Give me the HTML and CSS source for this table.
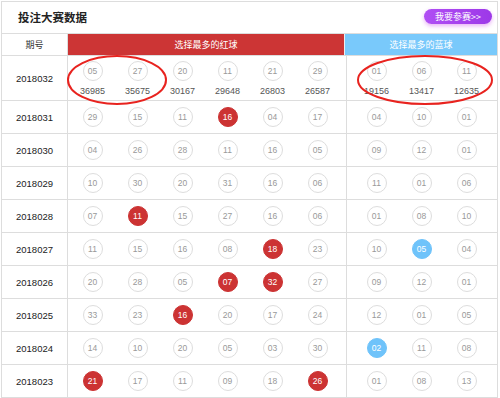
FILE: index.html
```html
<!DOCTYPE html>
<html lang="zh">
<head>
<meta charset="utf-8">
<title>投注大赛数据</title>
<link rel="stylesheet" href="styles.css">
</head>
<body>
<div class="panel">
  <div class="title-bar">
    <h1 class="title">投注大赛数据</h1>
    <a class="join">我要参赛&gt;&gt;</a>
  </div>
  <div class="row head">
    <div class="period">期号</div>
    <div class="reds">选择最多的红球</div>
    <div class="blues">选择最多的蓝球</div>
  </div>
  <div class="row top">
    <div class="period">2018032</div>
    <div class="reds">
      <div class="slot"><span class="ball">05</span><span class="count">36985</span></div>
      <div class="slot"><span class="ball">27</span><span class="count">35675</span></div>
      <div class="slot"><span class="ball">20</span><span class="count">30167</span></div>
      <div class="slot"><span class="ball">11</span><span class="count">29648</span></div>
      <div class="slot"><span class="ball">21</span><span class="count">26803</span></div>
      <div class="slot"><span class="ball">29</span><span class="count">26587</span></div>
    </div>
    <div class="blues">
      <div class="slot"><span class="ball">01</span><span class="count">19156</span></div>
      <div class="slot"><span class="ball">06</span><span class="count">13417</span></div>
      <div class="slot"><span class="ball">11</span><span class="count">12635</span></div>
    </div>
  </div>
  <div class="row">
    <div class="period">2018031</div>
    <div class="reds"><div class="slot"><span class="ball">29</span></div><div class="slot"><span class="ball">15</span></div><div class="slot"><span class="ball">11</span></div><div class="slot"><span class="ball red">16</span></div><div class="slot"><span class="ball">04</span></div><div class="slot"><span class="ball">17</span></div></div>
    <div class="blues"><div class="slot"><span class="ball">04</span></div><div class="slot"><span class="ball">10</span></div><div class="slot"><span class="ball">01</span></div></div>
  </div>
  <div class="row">
    <div class="period">2018030</div>
    <div class="reds"><div class="slot"><span class="ball">04</span></div><div class="slot"><span class="ball">26</span></div><div class="slot"><span class="ball">28</span></div><div class="slot"><span class="ball">11</span></div><div class="slot"><span class="ball">16</span></div><div class="slot"><span class="ball">05</span></div></div>
    <div class="blues"><div class="slot"><span class="ball">09</span></div><div class="slot"><span class="ball">12</span></div><div class="slot"><span class="ball">01</span></div></div>
  </div>
  <div class="row">
    <div class="period">2018029</div>
    <div class="reds"><div class="slot"><span class="ball">10</span></div><div class="slot"><span class="ball">30</span></div><div class="slot"><span class="ball">20</span></div><div class="slot"><span class="ball">31</span></div><div class="slot"><span class="ball">16</span></div><div class="slot"><span class="ball">06</span></div></div>
    <div class="blues"><div class="slot"><span class="ball">11</span></div><div class="slot"><span class="ball">01</span></div><div class="slot"><span class="ball">06</span></div></div>
  </div>
  <div class="row">
    <div class="period">2018028</div>
    <div class="reds"><div class="slot"><span class="ball">07</span></div><div class="slot"><span class="ball red">11</span></div><div class="slot"><span class="ball">15</span></div><div class="slot"><span class="ball">27</span></div><div class="slot"><span class="ball">16</span></div><div class="slot"><span class="ball">06</span></div></div>
    <div class="blues"><div class="slot"><span class="ball">01</span></div><div class="slot"><span class="ball">08</span></div><div class="slot"><span class="ball">10</span></div></div>
  </div>
  <div class="row">
    <div class="period">2018027</div>
    <div class="reds"><div class="slot"><span class="ball">11</span></div><div class="slot"><span class="ball">15</span></div><div class="slot"><span class="ball">16</span></div><div class="slot"><span class="ball">08</span></div><div class="slot"><span class="ball red">18</span></div><div class="slot"><span class="ball">23</span></div></div>
    <div class="blues"><div class="slot"><span class="ball">10</span></div><div class="slot"><span class="ball blue">05</span></div><div class="slot"><span class="ball">04</span></div></div>
  </div>
  <div class="row">
    <div class="period">2018026</div>
    <div class="reds"><div class="slot"><span class="ball">20</span></div><div class="slot"><span class="ball">28</span></div><div class="slot"><span class="ball">05</span></div><div class="slot"><span class="ball red">07</span></div><div class="slot"><span class="ball red">32</span></div><div class="slot"><span class="ball">27</span></div></div>
    <div class="blues"><div class="slot"><span class="ball">09</span></div><div class="slot"><span class="ball">12</span></div><div class="slot"><span class="ball">01</span></div></div>
  </div>
  <div class="row">
    <div class="period">2018025</div>
    <div class="reds"><div class="slot"><span class="ball">33</span></div><div class="slot"><span class="ball">23</span></div><div class="slot"><span class="ball red">16</span></div><div class="slot"><span class="ball">20</span></div><div class="slot"><span class="ball">17</span></div><div class="slot"><span class="ball">24</span></div></div>
    <div class="blues"><div class="slot"><span class="ball">12</span></div><div class="slot"><span class="ball">01</span></div><div class="slot"><span class="ball">05</span></div></div>
  </div>
  <div class="row">
    <div class="period">2018024</div>
    <div class="reds"><div class="slot"><span class="ball">14</span></div><div class="slot"><span class="ball">10</span></div><div class="slot"><span class="ball">20</span></div><div class="slot"><span class="ball">05</span></div><div class="slot"><span class="ball">03</span></div><div class="slot"><span class="ball">30</span></div></div>
    <div class="blues"><div class="slot"><span class="ball blue">02</span></div><div class="slot"><span class="ball">11</span></div><div class="slot"><span class="ball">08</span></div></div>
  </div>
  <div class="row">
    <div class="period">2018023</div>
    <div class="reds"><div class="slot"><span class="ball red">21</span></div><div class="slot"><span class="ball">17</span></div><div class="slot"><span class="ball">11</span></div><div class="slot"><span class="ball">09</span></div><div class="slot"><span class="ball">18</span></div><div class="slot"><span class="ball red">26</span></div></div>
    <div class="blues"><div class="slot"><span class="ball">01</span></div><div class="slot"><span class="ball">08</span></div><div class="slot"><span class="ball">13</span></div></div>
  </div>
  <svg class="marks" width="497" height="397" viewBox="0 0 497 397">
    <ellipse cx="116" cy="79" rx="49" ry="24" />
    <ellipse cx="424" cy="79" rx="67" ry="24" />
  </svg>
</div>
</body>
</html>
```

FILE: styles.css
```css
body {
  margin: 0;
  background: #fff;
  font-family: "Liberation Sans", "Noto Sans CJK SC", sans-serif;
}

.panel {
  position: relative;
  margin: 1px 0 0 1px;
  width: 495px;
  border: 1px solid #ddd;
  border-bottom: none;
}

.title-bar {
  height: 31px;
  border-bottom: 1px solid #ddd;
  display: flex;
  align-items: center;
  justify-content: space-between;
  padding: 0 5px 0 16px;
}

.title {
  margin: 0;
  font-family: "Noto Sans CJK SC", sans-serif;
  font-size: 11.5px;
  font-weight: bold;
  color: #222;
  line-height: 1;
}

.join {
  display: flex;
  align-items: center;
  justify-content: center;
  width: 68px;
  height: 15px;
  margin-top: -2px;
  border-radius: 8px;
  background: linear-gradient(90deg, #b04ef4, #9d38e8);
  box-shadow: 0 2px 4px rgba(205, 80, 235, 0.45);
  color: #fff;
  font-family: "Noto Sans CJK SC", sans-serif;
  font-size: 9px;
  line-height: 1;
}

.row {
  display: flex;
  height: 32px;
  border-bottom: 1px solid #ddd;
}

.row.head {
  height: 21px;
  font-family: "Noto Sans CJK SC", sans-serif;
  font-size: 9px;
}

.row.top {
  height: 44px;
}

.period {
  width: 65px;
  border-right: 1px solid #ddd;
  display: flex;
  align-items: center;
  justify-content: center;
  font-size: 9.5px;
  color: #222;
}

.head .period {
  font-size: 9px;
  color: #333;
}

.reds {
  width: 276px;
  border-right: 1px solid #ddd;
  padding-left: 2px;
  display: flex;
  align-items: center;
}

.blues {
  flex: 1;
  padding-left: 7px;
  display: flex;
  align-items: center;
}

.head .reds,
.head .blues {
  justify-content: center;
  padding: 0;
  color: #fff;
}

.head .reds {
  background: #cc3535;
  border-right-color: #eee;
}

.head .blues {
  background: #79c9fb;
}

.slot {
  width: 45px;
  display: flex;
  flex-direction: column;
  align-items: center;
}

.top .reds,
.top .blues {
  align-items: flex-start;
  padding-top: 5px;
}

.ball {
  box-sizing: border-box;
  width: 20px;
  height: 20px;
  border-radius: 50%;
  border: 1px solid #ddd;
  display: flex;
  align-items: center;
  justify-content: center;
  font-size: 8.5px;
  color: #999;
}

.ball.red {
  background: #cc3333;
  border-color: #cc3333;
  color: #fff;
}

.ball.blue {
  background: #6fc3fa;
  border-color: #6fc3fa;
  color: #fff;
}

.count {
  margin-top: 5px;
  font-size: 9px;
  color: #555;
  line-height: 10px;
}

.marks {
  position: absolute;
  left: -1px;
  top: -1px;
  pointer-events: none;
}

.marks ellipse {
  fill: none;
  stroke: #e8231f;
  stroke-width: 2;
}
```
